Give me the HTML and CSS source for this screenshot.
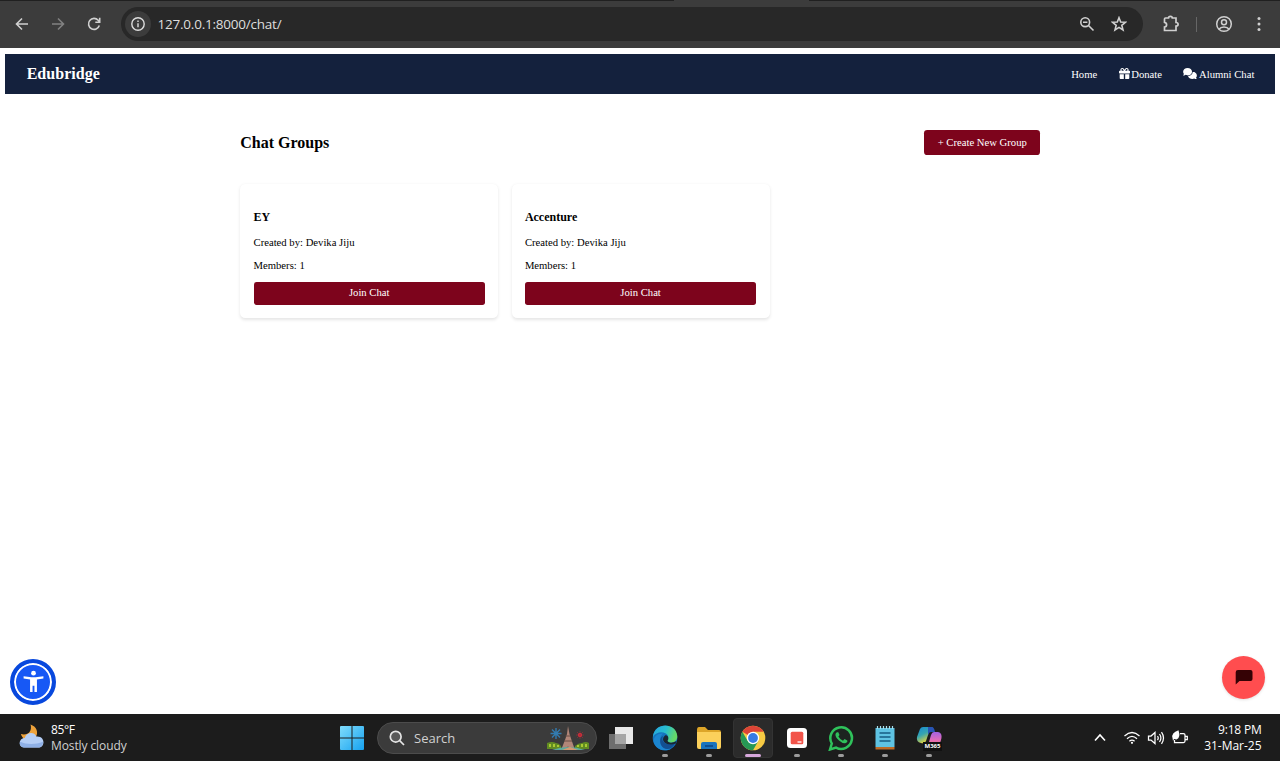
FILE: index.html
```html
<!DOCTYPE html>
<html lang="en">
<head>
<meta charset="utf-8">
<title>Chat Groups</title>
<link rel="stylesheet" href="styles.css">
</head>
<body>
<header class="browser">
  <div class="tabstrip"><span class="tab"></span></div>
  <div class="toolbar">
    <svg class="nav-icon back" viewBox="0 0 16 16"><path d="M14 8H3M8 2.500L2.500 8L8 13.500"/></svg>
    <svg class="nav-icon forward" viewBox="0 0 16 16"><path d="M2 8H13M8 2.500L13.500 8L8 13.500"/></svg>
    <svg class="nav-icon reload" viewBox="0 0 16 16"><path d="M13.300 9.500A5.500 5.500 0 1 1 12.200 4.300L13.500 5.700M13.700 1.800V6.200H9.300"/></svg>
    <div class="omnibox">
      <span class="site-info"><svg viewBox="0 0 16 16"><circle cx="8" cy="8" r="6.200"/><path d="M8 7.200V11.300M8 4.500V6"/></svg></span>
      <span class="url">127.0.0.1:8000/chat/</span>
      <svg class="nav-icon zoom" viewBox="0 0 16 16"><circle cx="6.200" cy="6.200" r="4.400"/><path d="M9.500 9.500L14.500 14.500M4 6.200H8.400"/></svg>
      <svg class="nav-icon star" viewBox="0 0 16 16"><path d="M8 1.700L9.700 6L14.400 6.300L10.800 9.300L12 13.900L8 11.400L4 13.900L5.200 9.300L1.600 6.300L6.300 6Z"/></svg>
    </div>
    <svg class="nav-icon puzzle" viewBox="0 0 18 18"><path d="M3.500 3H6.500C6.500 .8 10.300 .8 10.300 3H14V7.500C16.800 7.500 16.800 11 14 11V15.500H2.500V12C5.300 11.500 5.300 7.800 2.500 7.300V4Q2.500 3 3.500 3Z"/></svg>
    <span class="divider"></span>
    <svg class="nav-icon profile" viewBox="0 0 18 18"><circle cx="9" cy="9" r="7.300"/><circle cx="9" cy="7.300" r="2.500"/><path d="M4 14.200C6 11.300 12 11.300 14 14.200"/></svg>
    <svg class="dots" viewBox="0 0 6 16"><circle cx="3" cy="2.500" r="1.500"/><circle cx="3" cy="8" r="1.500"/><circle cx="3" cy="13.500" r="1.500"/></svg>
  </div>
</header>

<div class="page">
  <nav class="navbar">
    <span class="brand">Edubridge</span>
    <div class="links">
      <a>Home</a>
      <a><svg class="gift" viewBox="0 0 512 512"><path d="M190.500 68.800L225.300 128H152c-22.100 0-40-17.900-40-40s17.900-40 40-40h2.200c14.900 0 28.800 7.900 36.300 20.800zM64 88c0 14.400 3.500 28 9.600 40H32c-17.700 0-32 14.300-32 32v64c0 17.700 14.300 32 32 32H480c17.700 0 32-14.300 32-32V160c0-17.700-14.300-32-32-32H438.400c6.100-12 9.600-25.600 9.600-40c0-48.600-39.400-88-88-88h-2.200c-31.900 0-61.500 16.900-77.700 44.400L256 85.500l-24.100-41C215.700 16.900 186.100 0 154.200 0H152C103.400 0 64 39.400 64 88zm336 0c0 22.100-17.900 40-40 40H286.700l34.800-59.200C329.100 55.900 342.900 48 357.800 48H360c22.100 0 40 17.900 40 40zM32 288V464c0 26.500 21.500 48 48 48H224V288H32zM288 512H432c26.500 0 48-21.500 48-48V288H288V512z"/></svg>Donate</a>
      <a><svg class="comments" viewBox="0 0 640 512"><path d="M208 352c114.900 0 208-78.800 208-176S322.900 0 208 0S0 78.800 0 176c0 38.600 14.700 74.300 39.600 103.400c-3.500 9.400-8.700 17.700-14.200 24.700c-4.800 6.200-9.700 11-13.300 14.300c-10 9-11 14-11 20c0 8 6 14 15 14c21.900 0 43.800-6 60-14c17-7 31-15 40-21c28 12 59 19 92 19zM448 176c0 112-99 196-222 208c25 76 108 128 206 128c33 0 64-7 92-18c9 6 23 14 40 21c17 7 38 13 60 13c9 0 16-6 16-14c0-6-4-12-12-18c-10-8-22-24-28-40c25-29 40-65 40-103c0-93-85-169-193-176z"/></svg>Alumni Chat</a>
    </div>
  </nav>
  <main class="container">
    <div class="heading">
      <h2>Chat Groups</h2>
      <button class="btn create">+ Create New Group</button>
    </div>
    <div class="cards">
      <section class="card">
        <h3>EY</h3>
        <p>Created by: Devika Jiju</p>
        <p>Members: 1</p>
        <button class="btn join">Join Chat</button>
      </section>
      <section class="card">
        <h3>Accenture</h3>
        <p>Created by: Devika Jiju</p>
        <p>Members: 1</p>
        <button class="btn join">Join Chat</button>
      </section>
    </div>
  </main>
  <div class="access"><svg viewBox="0 0 24 24"><circle cx="12" cy="4" r="2.300"/><path d="M2.500 7L10 7.800H14L21.500 7V9L15.300 10V22H12.900V16H11.100V22H8.700V10L2.500 9Z"/></svg></div>
  <div class="chat-fab"><svg viewBox="0 0 18 16"><path d="M3 1H15.500Q17.500 1 17.500 3V10Q17.500 12 15.500 12H4.500L.7 15.500V3.300Q.7 1 3 1Z"/></svg></div>
</div>

<footer class="taskbar">
  <div class="weather">
    <svg viewBox="0 0 28 28"><path d="M13 2C15 9 10 14 3 12C5 19 13 21 18 16C22 10 19 4 13 2Z" fill="#eda23b"/><path d="M7 26C-.5 26 .5 16 7 16C8.500 10 17 9 19 14.500C28.500 13.500 28.500 26 21 26Z" fill="#b5cef6"/><path d="M7 26C2 26 1 21.500 2.500 20C9 23 18 23 26 20C26.500 23 24 26 21 26Z" fill="#8fb0e6"/></svg>
    <div class="weather-text"><span class="temp">85°F</span><span class="cond">Mostly cloudy</span></div>
  </div>
  <div class="apps">
    <span class="app start"><svg viewBox="0 0 24 24"><defs><linearGradient id="win" x1="0" y1="0" x2="1" y2="1"><stop offset="0" stop-color="#80dcfb"/><stop offset="1" stop-color="#16a2f1"/></linearGradient></defs><path fill="url(#win)" d="M0 1Q0 0 1 0H11.500V11.500H0ZM12.500 0H23Q24 0 24 1V11.500H12.500ZM0 12.500H11.500V24H1Q0 24 0 23ZM12.500 12.500H24V23Q24 24 23 24H12.500Z"/></svg></span>
    <div class="search">
      <svg class="lens" viewBox="0 0 16 16"><circle cx="6.700" cy="6.700" r="5.400"/><path d="M10.700 10.700L15 15"/></svg>
      <span class="search-label">Search</span>
      <svg class="tower" viewBox="0 0 42 26"><g stroke="#327bb0" stroke-width="1.400"><path d="M9 2V13M3.500 7.500H14.500M5 3.500L13 11.500M13 3.500L5 11.500"/></g><path d="M21 0L22.500 8L24.500 14L28 24H23.500Q21 17 18.500 24H14L18 14L20 8Z" fill="#b18678"/><path d="M18.500 10H23.500M17 15H25" stroke="#674d45"/><circle cx="33" cy="9" r="2" fill="#f02e3e"/><path d="M33 5V13M29 9H37M30 6L36 12M36 6L30 12" stroke="#a42c38" stroke-width=".6"/><path d="M0 17Q5 15 9 17Q12 17 14 20V23H0ZM28 20Q31 17 35 17Q39 15 42 17V23H28Z" fill="#608b23"/><path d="M3 18V21M7 18V21M11 19V21M31 19V21M35 18V21M39 18V21" stroke="#a9c932" stroke-width="2" fill="none"/><path d="M5 24Q21 18 38 24Z" fill="#5ba99d"/><path d="M15 24L23 21L31 24Z" fill="#d39971"/></svg>
    </div>
    <span class="app taskview"><svg viewBox="0 0 26 26"><path d="M2 9H19V24H2Z" fill="#6e6e6e"/><path d="M8 2H26V19H8Z" fill="#e8e8e8"/><path d="M8 9H19V19H8Z" fill="#a5a5a5"/></svg></span>
    <span class="app running"><svg viewBox="0 0 26 26"><defs><linearGradient id="edge" x1="0" y1="0" x2="1" y2=".3"><stop offset="0" stop-color="#26a3df"/><stop offset=".55" stop-color="#28bdcf"/><stop offset="1" stop-color="#65d967"/></linearGradient></defs><circle cx="13" cy="13" r="12.300" fill="#1473be"/><path d="M1 12C2-3 24-3 25.300 11C25.500 17 20 19 16 17C14 15.500 17 14 16 11C14 6 4 6 1 12Z" fill="url(#edge)"/><path d="M9 11C6 18 11 25 19 23.700C13 27 3 25 1.500 16C2 11 6 8 11 8.500Q9.500 9.500 9 11Z" fill="#1b85d0"/><path d="M11 11C8 17 15 21 23 18.500C20 25 12 26 9 20C7.500 16 8 12 11 11Z" fill="#134f91"/><path d="M13 10.500C16 9 17.500 14 15.500 15.500C16 18 20 18.500 24.500 16L24 18.500C16 21 11 18 11 14Q11 12 13 10.500Z" fill="#192634"/></svg></span>
    <span class="app running"><svg viewBox="0 0 26 26"><path d="M1 5Q1 2 3 2H9L12 5H23Q25 5 25 7V12H1Z" fill="#dda528"/><path d="M1 7H25V22Q25 24 23 24H3Q1 24 1 22Z" fill="#fbd05b"/><path d="M5 24V19Q5 17 7 17H19Q21 17 21 19V24Z" fill="#1973bd"/><path d="M9 21H17" stroke="#0e4e91" stroke-width="2"/></svg></span>
    <span class="app running active"><svg viewBox="0 0 26 26"><circle cx="13" cy="13" r="12.300" fill="#f7ca43"/><path d="M13 13L2.350 6.850A12.300 12.300 0 0 1 23.650 6.850H13Z" fill="#dc4437"/><path d="M2.350 6.850A12.300 12.300 0 0 0 13 25.300L18.300 16L13 13L7.700 16Z" fill="#269855"/><circle cx="13" cy="13" r="6.200" fill="#fff"/><circle cx="13" cy="13" r="4.900" fill="#377be4"/></svg></span>
    <span class="app running"><svg viewBox="0 0 26 26"><rect x="3" y="3" width="20" height="20" rx="3.500" fill="#fff"/><rect x="6.700" y="6.700" width="12.600" height="12.600" rx="1.500" fill="#f2544a"/><path d="M13.500 17H17.500" stroke="#fff" stroke-width="1.300"/></svg></span>
    <span class="app running"><svg viewBox="0 0 26 26"><path d="M2 24.500L3.800 18.500A10.800 10.800 0 1 1 8 22.600Z" fill="#1c2420" stroke="#2fc25b" stroke-width="2.500"/><path d="M9.200 7.200Q8 7.300 7.500 9Q7 12 11 15.500Q15 19 17.800 18Q20 17 19.300 15.500L16.500 14.100L15 15.700Q12 14.500 10.400 11.500L11.500 10L10.300 7.200Z" fill="#2fc25b"/></svg></span>
    <span class="app running"><svg viewBox="0 0 26 26"><path d="M3.500 3H22.500V22H3.500Z" fill="#5fc3e2"/><path d="M3.500 22H22.500V24.500H3.500Z" fill="#bd6b26"/><path d="M5.500 1V4M8.500 1V4M11.500 1V4M14.500 1V4M17.500 1V4M20.500 1V4" stroke="#a7dfed" stroke-width="1.200"/><path d="M7.500 8H18.500M7.500 12H18.500M7.500 16H18.500" stroke="#175e83" stroke-width="1.400"/></svg></span>
    <span class="app running m365"><svg viewBox="0 0 26 26"><defs><linearGradient id="cop1" x1="0" y1="0" x2=".5" y2="1"><stop offset="0" stop-color="#168bd5"/><stop offset=".5" stop-color="#36a5b1"/><stop offset="1" stop-color="#f0d734"/></linearGradient><linearGradient id="cop2" x1="0" y1="0" x2="0" y2="1"><stop offset="0" stop-color="#a362e3"/><stop offset=".6" stop-color="#e46db6"/><stop offset="1" stop-color="#ed7773"/></linearGradient></defs><path d="M7 2H15Q18 2 16 7H13L10 16Q9 19 5 18Q0 17 1 12L4 4Q5 2 7 2Z" fill="url(#cop1)"/><path d="M12 2H16Q18 2 19 7H15Q13 7 12 10Z" fill="#2854b4"/><path d="M18 7H22Q27 8 25 15L23 21H9Q12 21 13 17L15 10Q16 7 18 7Z" fill="url(#cop2)"/></svg><b>M365</b></span>
  </div>
  <div class="tray">
    <svg class="tray-icon chevron" viewBox="0 0 16 16"><path d="M3 10.500L8 5L13 10.500"/></svg>
    <svg class="tray-icon wifi" viewBox="0 0 18 16"><path d="M1.500 6Q9-1 16.500 6M4 8.700Q9 4 14 8.700M6.400 11.200Q9 8.900 11.600 11.200"/><circle cx="9" cy="12.800" r="1.100"/></svg>
    <svg class="tray-icon volume" viewBox="0 0 18 16"><path d="M1.500 6H4L8 2.500V13.500L4 10H1.500ZM10.500 6Q12 8 10.500 10M12.500 4Q15.300 8 12.500 12M14.500 2.200Q18.500 8 14.500 13.800"/></svg>
    <svg class="tray-icon battery" viewBox="0 0 18 16"><path d="M9 3.500H12.500Q14 3.500 14 5V11Q14 12.500 12.500 12.500H3.500V10M14.500 6.300H16.300V9.700H14.500"/><path class="leaf" d="M1.500 8Q0 3 7.500 .3Q10 8 5.500 9.500L3 9L2 11Z"/></svg>
    <div class="clock"><span>9:18 PM</span><span class="date">31-Mar-25</span></div>
  </div>
</footer>
</body>
</html>
```
FILE: styles.css
```css
* { box-sizing: border-box; }
body {
  margin: 0;
  width: 1280px;
  height: 761px;
  display: flex;
  flex-direction: column;
  overflow: hidden;
  background: #fff;
  font-family: "Liberation Serif", serif;
  font-size: 10.667px;
  color: #000;
}
svg { display: block; flex: none; }

/* Browser chrome */
.browser {
  height: 48px;
  flex: none;
  background: #3c3c3c;
  font-family: "Open Sans", sans-serif;
}
.tabstrip { height: 1px; background: #202020; padding-left: 674px; }
.tab { display: block; width: 135px; height: 1px; background: #3c3c3c; }
.toolbar { display: flex; align-items: center; height: 47px; padding: 0 18.500px 1px 14px; }
.nav-icon {
  width: 16px;
  height: 16px;
  fill: none;
  stroke: #d0d0d0;
  stroke-width: 1.6;
}
.forward { margin-left: 20px; stroke: #818181; }
.reload { margin-left: 20px; }
.omnibox {
  display: flex;
  align-items: center;
  width: 1022px;
  height: 34px;
  margin-left: 18.500px;
  padding: 0 16px 0 4px;
  border-radius: 17px;
  background: #282828;
}
.site-info {
  display: flex;
  align-items: center;
  justify-content: center;
  width: 26px;
  height: 26px;
  border-radius: 50%;
  background: #3c3c3c;
}
.site-info svg { width: 16px; height: 16px; fill: none; stroke: #ddd; stroke-width: 1.4; }
.url { flex: 1; margin-left: 7px; font-size: 13.500px; letter-spacing: -.22px; color: #dedede; }
.star { margin-left: 16px; }
.puzzle { width: 18px; height: 18px; margin-left: 19px; stroke-width: 1.700; }
.divider { width: 1px; height: 15px; margin-left: 16px; background: #666; }
.profile { width: 18px; height: 18px; margin-left: 18px; stroke-width: 1.500; }
.dots { width: 6px; height: 16px; margin-left: auto; fill: #d0d0d0; }

/* Page */
.page { position: relative; flex: 1; padding: 6px 4.667px 0 5.333px; }
.navbar {
  display: flex;
  align-items: center;
  justify-content: space-between;
  height: 39.500px;
  padding: 1px 21px 0 21.333px;
  background: #14213d;
  color: #fff;
}
.brand { font-size: 16px; line-height: 18px; font-weight: bold; letter-spacing: .04px; padding-bottom: 1px; }
.links { display: flex; gap: 21.333px; }
.links a { display: flex; align-items: center; gap: 1.700px; }
.links svg { fill: #fff; margin-bottom: 1px; }
.gift { width: 11px; height: 11px; }
.comments { width: 14px; height: 11px; }
.container { width: 800px; margin: 36px 0 0 234.900px; }
.heading { display: flex; align-items: center; justify-content: space-between; }
h2 { margin: 0; padding-top: 1px; font-size: 16px; line-height: 18px; }
.btn {
  border: 0;
  background: #7d041c;
  color: #fff;
  font-family: inherit;
  font-size: 10.667px;
  line-height: 12px;
}
.create { width: 116px; height: 25.500px; padding: 1px 0 0; border-radius: 3.333px; }
.cards { display: grid; grid-template-columns: repeat(3, 258px); gap: 13.333px; margin-top: 29px; }
.card {
  height: 133.500px;
  padding: 27px 13.333px 13.333px;
  border-radius: 5.333px;
  background: #fff;
  box-shadow: 0 1.333px 3.333px rgba(0, 0, 0, .1);
}
.card h3 { margin: 0 0 13px; font-size: 12px; line-height: 13px; }
.card p { margin: 0 0 10.500px; line-height: 12px; }
.join { display: block; width: 100%; height: 22.700px; padding: 0; border-radius: 2.667px; }
.access {
  position: absolute;
  left: 10px;
  bottom: 9.500px;
  width: 46px;
  height: 46px;
  display: flex;
  align-items: center;
  justify-content: center;
  border: 4px solid #0848dd;
  border-radius: 50%;
  background: #1758f5;
  box-shadow: inset 0 0 0 2px #fff;
}
.access svg { width: 25px; height: 25px; fill: #fff; }
.chat-fab {
  position: absolute;
  right: 15px;
  bottom: 15.500px;
  width: 43px;
  height: 43px;
  display: flex;
  align-items: center;
  justify-content: center;
  border-radius: 50%;
  background: #ff4d4f;
  box-shadow: 0 1px 3px rgba(0, 0, 0, .12);
}
.chat-fab svg { width: 18px; height: 16px; fill: #350205; }

/* Taskbar */
.taskbar {
  display: flex;
  flex: none;
  height: 47px;
  background: #1c1c1c;
  color: #fff;
  font-family: "Open Sans", sans-serif;
  font-size: 12px;
}
.weather { display: flex; width: 330px; padding: 8px 0 0 18px; }
.weather > svg { width: 27px; height: 28px; }
.weather-text { display: flex; flex-direction: column; margin-left: 6px; line-height: 16px; }
.temp { letter-spacing: -.4px; }
.cond { color: #d0d0d0; letter-spacing: -.1px; }
.apps { display: flex; align-items: center; width: 621px; height: 47px; }
.app {
  position: relative;
  display: flex;
  align-items: center;
  justify-content: center;
  width: 44px;
  height: 47px;
}
.app svg { width: 26px; height: 26px; }
.start svg { width: 24px; height: 24px; }
.taskview { padding-right: 2px; }
.running::after {
  content: "";
  position: absolute;
  left: 19px;
  bottom: 4px;
  width: 6px;
  height: 3px;
  border-radius: 2px;
  background: #9c9c9c;
}
.active::before {
  content: "";
  position: absolute;
  inset: 4px 2px 3px;
  border: 1px solid #333;
  border-radius: 4px;
  background: #2b2b2b;
}
.active svg { position: relative; }
.active::after { left: 14px; width: 16px; background: #d6a7db; }
.m365 b {
  position: absolute;
  left: 16px;
  top: 28px;
  width: 19px;
  height: 9px;
  background: #111;
  font-size: 6px;
  line-height: 9px;
  text-align: center;
}
.search {
  display: flex;
  align-items: center;
  width: 220px;
  height: 32px;
  margin: 0 2px 0 3px;
  padding: 0 7px 0 11px;
  border: 1px solid #4c4c4c;
  border-radius: 16px;
  background: #3b3b3b;
}
.lens { width: 16px; height: 16px; fill: #595959; stroke: #e5e5e5; stroke-width: 1.700; }
.search-label { flex: 1; margin-left: 9px; color: #d0d0d0; font-size: 13px; }
.tower { width: 42px; height: 26px; margin-top: 2px; }
.tray { display: flex; align-items: center; flex: 1; padding: 0 18.500px 0 140.500px; }
.tray-icon { width: 18px; height: 16px; fill: none; stroke: #fff; stroke-width: 1.250; }
.chevron { width: 16px; stroke-width: 1.600; }
.wifi { margin-left: 15px; }
.volume { margin-left: 6px; }
.battery { margin-left: 6px; }
.leaf, .wifi circle { fill: #fff; stroke: none; }
.clock { flex: 1; display: flex; flex-direction: column; line-height: 16px; text-align: right; letter-spacing: -.2px; white-space: nowrap; }
.date { letter-spacing: -.02px; }
```
